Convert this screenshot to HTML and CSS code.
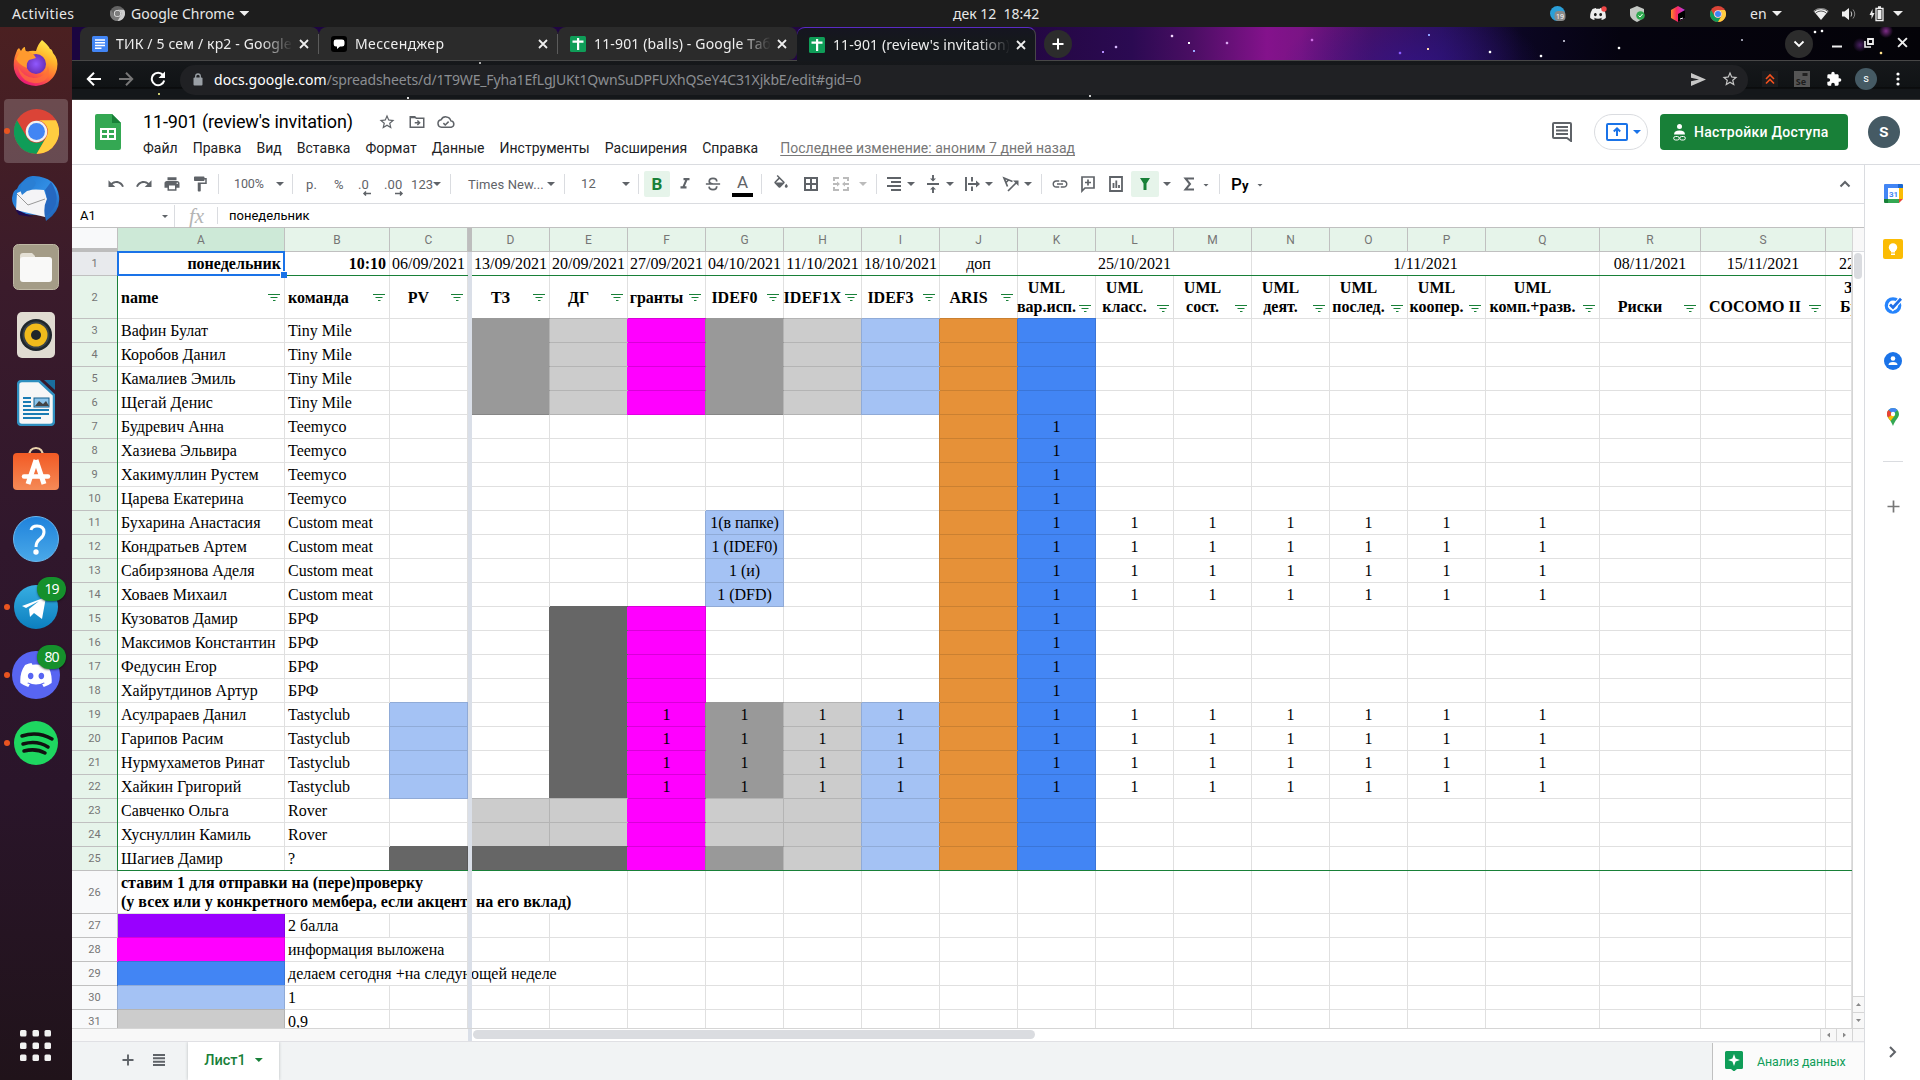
FILE: index.html
```html
<!DOCTYPE html>
<html lang="ru">
<head>
<meta charset="utf-8">
<title>11-901 (review's invitation)</title>
<link rel="stylesheet" href="styles.css">
</head>
<body>
<svg width="0" height="0" class="defs">
  <defs>
    <linearGradient id="ff" x1="0.8" y1="0" x2="0.3" y2="1"><stop offset="0" stop-color="#fff44f"/><stop offset=".35" stop-color="#ffb32c"/><stop offset=".65" stop-color="#ff6a36"/><stop offset="1" stop-color="#e8127c"/></linearGradient>
    <radialGradient id="ffp"><stop offset="0" stop-color="#9059ff"/><stop offset="1" stop-color="#6a2fb8"/></radialGradient>
    <linearGradient id="tb" x1="0" y1="0" x2="1" y2="1"><stop offset="0" stop-color="#1b6fc9"/><stop offset=".6" stop-color="#3795ea"/><stop offset="1" stop-color="#1550a6"/></linearGradient>
    <linearGradient id="sw" x1="0" y1="0" x2="0" y2="1"><stop offset="0" stop-color="#f25a24"/><stop offset="1" stop-color="#f58a57"/></linearGradient>
    <linearGradient id="hp" x1="0" y1="0" x2="0" y2="1"><stop offset="0" stop-color="#1f82dc"/><stop offset="1" stop-color="#4aa9e8"/></linearGradient>
    <linearGradient id="tg" x1="0" y1="0" x2="0" y2="1"><stop offset="0" stop-color="#37aee2"/><stop offset="1" stop-color="#0c7fbf"/></linearGradient>
    <linearGradient id="jb" x1="0" y1="0" x2="1" y2="0"><stop offset="0" stop-color="#fc8b2b"/><stop offset=".4" stop-color="#fb2a5c"/><stop offset="1" stop-color="#b23bf7"/></linearGradient>
    <symbol id="chrome" viewBox="0 0 48 48"><circle cx="24" cy="24" r="24" fill="#db4437"/><path d="M3.2 12A24 24 0 0 0 24 48L34.4 30A12 12 0 0 1 13.6 30Z" fill="#0f9d58"/><path d="M44.8 12A24 24 0 0 1 24 48L34.4 30A12 12 0 0 0 24 12Z" fill="#ffcd40"/><circle cx="24" cy="24" r="11.5" fill="#f1f1f1"/><circle cx="24" cy="24" r="9" fill="#4285f4"/></symbol>
    <symbol id="discord" viewBox="0 0 24 18"><path d="M20.3 1.5A19 19 0 0 0 15.5 0l-.7 1.3a18 18 0 0 0-5.5 0L8.600 0a19 19 0 0 0-4.800 1.500C.7 6 -.1 10.500.3 15a19 19 0 0 0 5.900 3l1.200-2-1.900-.9.5-.4a14 14 0 0 0 12 0l.5.4-1.900.9 1.200 2a19 19 0 0 0 5.900-3c.5-5.200-.8-9.700-3.400-13.500zM8 12.200c-1.200 0-2.100-1.100-2.100-2.400S6.800 7.400 8 7.400s2.200 1.100 2.100 2.400c0 1.300-.9 2.400-2.100 2.400zm8 0c-1.200 0-2.100-1.100-2.100-2.400s.9-2.400 2.100-2.400 2.200 1.100 2.100 2.400c0 1.300-.9 2.400-2.100 2.400z"/></symbol>
    <symbol id="x" viewBox="0 0 10 10"><path d="M1 1l8 8M9 1l-8 8" stroke="currentColor" stroke-width="1.8" fill="none"/></symbol>
    <symbol id="star" viewBox="0 0 24 24"><path fill="currentColor" d="M22 9.240l-7.190-.62L12 2 9.190 8.630 2 9.240l5.460 4.730L5.820 21 12 17.270 18.180 21l-1.630-7.030L22 9.240zM12 15.400l-3.760 2.270 1-4.280-3.320-2.880 4.380-.38L12 6.100l1.710 4.040 4.380.38-3.320 2.880 1 4.280L12 15.400z"/></symbol>
    <symbol id="gsheet" viewBox="0 0 16 16"><rect width="16" height="16" rx="1.500" fill="#0f9d58"/><path d="M2.500 4.500h11v2.200h-11zM7 2h2.200v12H7z" fill="#fff"/></symbol>
    <symbol id="filt" viewBox="0 0 12 7"><path d="M0 .5h12M2.500 3.500h7M5 6.500h2.500" stroke="#188038" stroke-width="1"/></symbol>
  </defs>
</svg>

<header class="topbar">
  <span class="activities">Activities</span>
  <span class="appmenu"><svg width="15" height="15" class="gray"><use href="#chrome"/></svg><span class="appname">Google Chrome</span><i class="dn white"></i></span>
  <span class="clock">дек 12&nbsp; 18:42</span>
  <div class="tray">
    <svg width="16" height="16" viewBox="0 0 16 16"><circle cx="7.500" cy="7.500" r="7.500" fill="#2b9fd8"/><rect x="4.500" y="5" width="11" height="10" rx="4" fill="#8a8a8a"/><text x="10" y="13" class="t8">19</text></svg>
    <svg width="17" height="16" viewBox="0 0 17 16"><svg y="2" width="16" height="12" viewBox="0 0 24 18"><use href="#discord" fill="#eee"/></svg><circle cx="14" cy="3" r="2.700" fill="#f04747"/></svg>
    <svg width="16" height="16" viewBox="0 0 16 16"><path d="M7 0l7 3v5c0 4-3 6-7 8C3 14 0 12 0 8V3z" fill="#c4c8c4"/><circle cx="10.500" cy="9.500" r="4.300" fill="#2fa84f"/><path d="M8.500 9.500l1.500 1.500 2.500-3" stroke="#fff" fill="none"/></svg>
    <svg width="16" height="16" viewBox="0 0 16 16"><path d="M8 0l7 4v8l-7 4-7-4V4z" fill="url(#jb)"/><path d="M8 8l7-4v8l-7 4z" fill="#000"/><path d="M10 13l3-1" stroke="#fff"/></svg>
    <svg width="16" height="16"><use href="#chrome"/></svg>
    <span>en</span><i class="dn white"></i>
    <svg width="16" height="14" viewBox="0 0 16 14"><path d="M8 13L.5 4a11 11 0 0 1 15 0z" fill="#eee"/><path d="M1 4.500a10 10 0 0 1 14 0M2.500 6.200a8 8 0 0 1 11 0" stroke="#1d1d1d" stroke-width=".7" fill="none"/></svg>
    <svg width="16" height="14" viewBox="0 0 16 14"><path d="M1 4.500h2.500L8 1v12L3.500 9.500H1z" fill="#eee"/><path d="M10 4.500q1.500 2.500 0 5" stroke="#ccc" fill="none"/><path d="M12 2.500q3.500 4.500 0 9" stroke="#888" fill="none"/></svg>
    <svg width="16" height="16" viewBox="0 0 16 16"><path d="M3.500 3L.5 9h2v4l3-6h-2z" fill="#eee"/><path d="M7 2.500h7v12H7zM9 1h3" stroke="#eee" stroke-width="1.300" fill="none"/><path d="M8.500 4h4v9h-4z" fill="#eee"/></svg>
    <i class="dn white"></i>
  </div>
</header>

<div class="desk">
<nav class="dock">
  <div class="app"><svg width="46" height="46" viewBox="0 0 46 46"><path d="M3 13q1-4 3-5l2 3q2-4 4-4 0 4 2 5 4-2 9-1Q25 4 29 0q7 6 8 9 2 0 3 4 6 6 4 16Q40 44 23 46 5 45 1 29 0 20 3 13z" fill="url(#ff)"/><circle cx="23" cy="24" r="10" fill="url(#ffp)"/><path d="M7 12q7-3 14 3l2 3-7 2q-3 3-2 8-8-3-11-9z" fill="#ff9a2e"/><path d="M5 27q8 14 22 10 7-3 8-11 3 10-4 15-10 5-19-1-6-5-7-13z" fill="#ff7139" opacity=".7"/></svg></div>
  <div class="app active run"><svg width="45" height="45"><use href="#chrome"/></svg></div>
  <div class="app"><svg width="48" height="48" viewBox="0 0 48 48"><path d="M10 7Q16 0 22 1q22 1 25 20 2 15-13 25l-1-5-20-2Q0 34 0 23q1-8 5-9 1-4 5-7z" fill="url(#tb)"/><path d="M5 18l7-3q14-1 20 0l3 9-2 18L4 35z" fill="#f4f4f6"/><path d="M5 19l11 11 17-6" stroke="#999" fill="none"/><path d="M10 8q10-8 14 0-2 7-9 8l-5 4q-3-6 0-12z" fill="#2a7fd4"/><path d="M33 42q-2-10 2-18l-2-9 6-8q14 22-6 35z" fill="#2568c0"/><path d="M3 34l18 8-14-2z" fill="#1d0b52"/></svg></div>
  <div class="app"><svg width="46" height="46" viewBox="0 0 46 46"><rect x=".5" y=".5" width="45" height="45" rx="5" fill="#a49c87" stroke="#bfb8a5"/><path d="M7 12q0-3 3-3h9l3 3v8H7z" fill="#e4e0d5"/><rect x="7" y="13" width="32" height="25" rx="3" fill="#f9f9f8"/></svg></div>
  <div class="app"><svg width="38" height="46" viewBox="0 0 38 46"><rect width="38" height="46" rx="5" fill="#e0dbd1"/><circle cx="19" cy="23" r="16" fill="#1f262b"/><circle cx="19" cy="23" r="13.500" fill="#394248"/><circle cx="19" cy="23" r="11.500" fill="#f1bb1c"/><circle cx="19" cy="23" r="5" fill="#20262a"/></svg></div>
  <div class="app"><svg width="38" height="46" viewBox="0 0 38 46"><path d="M5 1h17l15 14v26q0 4-4 4H5q-4 0-4-4V5q0-4 4-4z" fill="#f7f7f7" stroke="#2f8fbf" stroke-width="2.500"/><path d="M27 0h11v10z" fill="#1a6e9e"/><path d="M6 18h8M6 22h8M6 26h8M6 30h26M6 34h26M6 38h18" stroke="#1b7cb4" stroke-width="2"/><rect x="17" y="18" width="15" height="9" fill="#8cc4ea" stroke="#14618e"/><path d="M18 26l4-5 4 3 3-3 3 5z" fill="#444"/></svg></div>
  <div class="app"><svg width="46" height="50" viewBox="0 0 46 50"><path d="M16 11q0-9 7-9t7 9" stroke="#ead2ab" stroke-width="2" fill="none"/><rect y="7" width="46" height="37" rx="4" fill="url(#sw)"/><path d="M23 14l-8 24M23 14l8 24" stroke="#fff" stroke-width="5"/><path d="M11 30.500h24" stroke="#fff" stroke-width="4.500" stroke-linecap="round"/></svg></div>
  <div class="app"><svg width="46" height="46" viewBox="0 0 46 46"><circle cx="23" cy="23" r="22.500" fill="url(#hp)" stroke="#6bb8ef"/><path d="M18 14q1-4 6-4 7 0 7 6 0 4-4 7-4 3-4 8" stroke="#fff" stroke-width="3" fill="none"/><circle cx="23" cy="36" r="2.700" fill="#fff"/></svg></div>
  <div class="app run"><svg width="44" height="44" viewBox="0 0 44 44"><circle cx="22" cy="22" r="22" fill="url(#tg)"/><path d="M8 21l24-9-4 22-8-6-4 4-1-8 10-8-13 7z" fill="#fff"/></svg><b class="badge">19</b></div>
  <div class="app run"><svg width="48" height="48" viewBox="0 0 48 48"><circle cx="24" cy="24" r="24" fill="#5865f2"/><svg x="8" y="12" width="32" height="24" viewBox="0 0 24 18"><use href="#discord" fill="#fff"/></svg></svg><b class="badge">80</b></div>
  <div class="app run"><svg width="44" height="44" viewBox="0 0 44 44"><circle cx="22" cy="22" r="22" fill="#1ed760"/><path d="M8 15q16-5 30 3M9 23q14-4 25 3M10 30q12-3 21 2" stroke="#111" stroke-width="3.500" fill="none" stroke-linecap="round"/></svg></div>
  <div class="app grid9"><svg width="32" height="32" viewBox="0 0 32 32" fill="#f2f2f2"><rect width="6.500" height="6.500" rx="1.500"/><rect x="12.500" width="6.500" height="6.500" rx="1.500"/><rect x="24.500" width="6.500" height="6.500" rx="1.500"/><rect y="12.500" width="6.500" height="6.500" rx="1.500"/><rect x="12.500" y="12.500" width="6.500" height="6.500" rx="1.500"/><rect x="24.500" y="12.500" width="6.500" height="6.500" rx="1.500"/><rect y="24.500" width="6.500" height="6.500" rx="1.500"/><rect x="12.500" y="24.500" width="6.500" height="6.500" rx="1.500"/><rect x="24.500" y="24.500" width="6.500" height="6.500" rx="1.500"/></svg></div>
</nav>

<main class="win">
  <div class="strip">
    <div class="tab"><svg width="16" height="16" viewBox="0 0 16 16"><rect width="16" height="16" rx="1.500" fill="#4285f4"/><path d="M3 4h10M3 6.800h10M3 9.600h10M3 12.200h6.500" stroke="#fff" stroke-width="1.500"/></svg><span class="ttl">ТИК / 5 сем / кр2 - Google</span><svg width="10" height="10"><use href="#x"/></svg></div>
    <div class="tab"><svg width="16" height="16" viewBox="0 0 16 16"><rect width="16" height="16" rx="3" fill="#000"/><path d="M5 3.500h6q2.500 0 2.500 2.300v2.500q0 2.200-2.500 2.200H9L6 13v-2.500H5Q2.700 10.500 2.700 8.300V5.800Q2.700 3.500 5 3.500z" fill="#fff"/></svg><span class="ttl wide">Мессенджер</span><svg width="10" height="10"><use href="#x"/></svg></div>
    <div class="tab nosep"><svg width="16" height="16"><use href="#gsheet"/></svg><span class="ttl">11-901 (balls) - Google Таб</span><svg width="10" height="10"><use href="#x"/></svg></div>
    <div class="tab cur nosep"><svg width="16" height="16"><use href="#gsheet"/></svg><span class="ttl">11-901 (review's invitation)</span><svg width="10" height="10"><use href="#x"/></svg></div>
    <div class="round"><svg width="12" height="12" viewBox="0 0 12 12"><path d="M6 .5v11M.5 6h11" stroke="#fff" stroke-width="2"/></svg></div>
    <div class="winbtns">
      <div class="round"><svg width="12" height="8" viewBox="0 0 12 8"><path d="M1.500 1.500L6 6l4.500-4.500" stroke="#fff" stroke-width="1.800" fill="none"/></svg></div>
      <svg width="10" height="10" viewBox="0 0 10 10"><path d="M0 8.500h10" stroke="#eee" stroke-width="2"/></svg>
      <svg width="10" height="10" viewBox="0 0 10 10"><path d="M4 1h5v5H4z" stroke="#eee" stroke-width="1.800" fill="none"/><path d="M1 3v6h6" stroke="#eee" stroke-width="1.600" fill="none"/></svg>
      <svg width="11" height="11"><use href="#x"/></svg>
    </div>
  </div>
  <div class="navbar">
    <svg width="16" height="14" viewBox="0 0 16 14"><path d="M8 .8L1.800 7 8 13.200M2 7h13" stroke="#fff" stroke-width="2" fill="none"/></svg>
    <svg width="16" height="14" viewBox="0 0 16 14"><path d="M8 .8L14.200 7 8 13.200M14 7H1" stroke="#777" stroke-width="2" fill="none"/></svg>
    <svg width="16" height="16" viewBox="0 0 16 16"><path d="M13 4A6.300 6.300 0 1 0 14.200 9.500" stroke="#fff" stroke-width="2" fill="none"/><path d="M15 .5V7H8.500z" fill="#fff"/></svg>
    <div class="omni">
      <svg width="10" height="13" viewBox="0 0 10 13"><rect x=".5" y="4.500" width="9" height="8" rx="1" fill="#9aa0a6"/><path d="M2.700 5V3.300a2.300 2.300 0 0 1 4.600 0V5" stroke="#9aa0a6" stroke-width="1.300" fill="none"/></svg>
      <span class="url"><em>docs.google.com</em>/spreadsheets/d/1T9WE_Fyha1EfLgJUKt1QwnSuDPFUXhQSeY4C31XjkbE/edit#gid=0</span>
      <svg class="send" width="15" height="13" viewBox="0 0 15 13"><path d="M0 0l15 6.500L0 13V8.200l8-1.700-8-1.700z" fill="#c6c6c6"/></svg>
      <svg class="fav" width="18" height="18"><use href="#star"/></svg>
    </div>
    <div class="exts">
      <svg width="16" height="16" viewBox="0 0 16 16"><rect width="16" height="16" fill="#1c1c1e"/><path d="M4 8l4-4 4 4M4 12.500l4-4 4 4" stroke="#f4511e" stroke-width="1.600" fill="none"/></svg>
      <svg width="16" height="16" viewBox="0 0 16 16"><rect width="16" height="16" fill="#555"/><rect x="8.500" y="2" width="5" height="3" fill="#222"/><text x="7" y="14" class="se">Se</text></svg>
      <svg width="16" height="16" viewBox="0 0 24 24"><path fill="#fff" d="M20.500 11H19V7c0-1.100-.9-2-2-2h-4V3.500a2.500 2.500 0 0 0-5 0V5H4a2 2 0 0 0-2 2v3.800h1.500a2.700 2.700 0 0 1 0 5.400H2V20a2 2 0 0 0 2 2h3.800v-1.500a2.700 2.700 0 0 1 5.400 0V22H17a2 2 0 0 0 2-2v-4h1.500a2.500 2.500 0 0 0 0-5z"/></svg>
      <b class="ava s">s</b>
      <svg width="4" height="14" viewBox="0 0 4 14" fill="#fff"><circle cx="2" cy="2" r="1.600"/><circle cx="2" cy="7" r="1.600"/><circle cx="2" cy="12" r="1.600"/></svg>
    </div>
  </div>

  <div class="dochead">
    <svg width="26" height="36" viewBox="0 0 26 36"><path d="M2 0h15l9 9v25q0 2-2 2H2q-2 0-2-2V2q0-2 2-2z" fill="#34a853"/><path d="M17 0l9 9h-9z" fill="#188038"/><path d="M5 14h16v12H5z" fill="#fff"/><path d="M7 16h5v3H7zM14 16h5v3h-5zM7 21h5v3H7zM14 21h5v3h-5z" fill="#34a853"/></svg>
    <div class="names">
      <div class="trow"><h1>11-901 (review's invitation)</h1>
        <svg width="18" height="18" color="#5f6368"><use href="#star"/></svg>
        <svg width="18" height="18" viewBox="0 0 24 24"><path fill="none" stroke="#5f6368" stroke-width="2" d="M3 5h6l2 2h10v12H3zM3 6h7M9 13h6M12.500 10l3 3-3 3"/></svg>
        <svg width="18" height="18" viewBox="0 0 24 24"><path fill="none" stroke="#5f6368" stroke-width="2" d="M6 19a5 5 0 0 1-.6-9.900A7 7 0 0 1 18.500 10.500 4.300 4.300 0 0 1 19 19zM8.500 13.500l2.500 2.500 4.500-4.500"/></svg>
      </div>
      <div class="menus"><span>Файл</span><span>Правка</span><span>Вид</span><span>Вставка</span><span>Формат</span><span>Данные</span><span>Инструменты</span><span>Расширения</span><span>Справка</span><u>Последнее изменение: аноним 7 дней назад</u></div>
    </div>
    <div class="headr">
      <svg width="20" height="20" viewBox="0 0 20 20"><path d="M2 1h16q1 0 1 1v17l-4-3H2q-1 0-1-1V2q0-1 1-1z" fill="none" stroke="#5f6368" stroke-width="2"/><path d="M4 5h12M4 8.500h12M4 12h12" stroke="#5f6368" stroke-width="1.800"/></svg>
      <div class="present"><svg width="22" height="18" viewBox="0 0 22 18"><rect x="1" y="1" width="20" height="16" rx="1" fill="none" stroke="#1a73e8" stroke-width="2"/><path d="M11 13V6M7.800 8.500L11 5.300l3.200 3.200" stroke="#1a73e8" stroke-width="2" fill="none"/></svg><i class="dn blue"></i></div>
      <div class="share"><svg width="13" height="17" viewBox="0 0 13 17"><circle cx="6.500" cy="2.500" r="2.500" fill="#fff"/><path d="M1 10.500Q1 6.500 6.500 6.500T12 10.500z" fill="#fff"/><rect x=".7" y="12.500" width="5.500" height="3.500" rx="1.700" fill="none" stroke="#fff"/><rect x="6.800" y="12.500" width="5.500" height="3.500" rx="1.700" fill="none" stroke="#fff"/></svg><span>Настройки Доступа</span></div>
      <b class="ava">s</b>
    </div>
  </div>

  <div class="work">
    <div class="editor">
      <div class="toolbar">
        <svg width="18" height="18" viewBox="0 0 24 24"><path fill="#5f6368" d="M12.500 8c-2.650 0-5.050.99-6.900 2.600L2 7v9h9l-3.620-3.620c1.390-1.160 3.160-1.880 5.120-1.880 3.540 0 6.550 2.310 7.600 5.500l2.370-.78C21.080 11.030 17.150 8 12.500 8z"/></svg>
        <svg width="18" height="18" viewBox="0 0 24 24"><path fill="#5f6368" d="M18.400 10.600C16.550 8.990 14.150 8 11.500 8c-4.650 0-8.580 3.030-9.960 7.220L3.900 16c1.050-3.190 4.050-5.500 7.600-5.500 1.950 0 3.730.72 5.120 1.880L13 16h9V7l-3.600 3.600z"/></svg>
        <svg width="18" height="18" viewBox="0 0 24 24"><path fill="#5f6368" d="M19 8H5c-1.660 0-3 1.340-3 3v6h4v4h12v-4h4v-6c0-1.660-1.340-3-3-3zm-3 11H8v-5h8v5zm3-7c-.55 0-1-.45-1-1s.45-1 1-1 1 .45 1 1-.45 1-1 1zm-1-9H6v4h12V3z"/></svg>
        <svg width="18" height="18" viewBox="0 0 24 24"><path fill="#5f6368" d="M18 4V3c0-.55-.45-1-1-1H5c-.55 0-1 .45-1 1v4c0 .55.45 1 1 1h12c.55 0 1-.45 1-1V6h1v4H9v11c0 .55.45 1 1 1h2c.55 0 1-.45 1-1v-9h8V4h-3z"/></svg>
        <i class="sep"></i><span class="up pct">100%</span><i class="dn"></i><i class="sep"></i>
        <span>р.</span><span>%</span><span>.0<svg class="sub" width="9" height="5" viewBox="0 0 9 5"><path d="M9 2.500H2M4 .5l-2 2 2 2" stroke="#5f6368" stroke-width="1.500" fill="none"/></svg></span><span>.00<svg class="sub" width="9" height="5" viewBox="0 0 9 5"><path d="M0 2.500h7M5 .5l2 2-2 2" stroke="#5f6368" stroke-width="1.500" fill="none"/></svg></span><span>123</span><i class="dn"></i><i class="sep"></i>
        <span class="face">Times New...</span><i class="dn"></i><i class="sep"></i><span class="up">12</span><i class="dn"></i><i class="sep"></i>
        <span class="on"><b>B</b></span>
        <svg width="18" height="18" viewBox="0 0 24 24"><path fill="#5f6368" d="M10 4v3h2.210l-3.420 8H6v3h8v-3h-2.210l3.420-8H18V4z"/></svg>
        <svg width="18" height="18" viewBox="0 0 24 24"><path fill="none" stroke="#5f6368" stroke-width="2.300" d="M2.500 12h19M17 8.500Q17 4.500 12 4.500T7 8.500Q7 11 12 12M17 15Q17 19.500 12 19.500T6.800 15.500"/></svg>
        <span class="fc">A</span><i class="sep"></i>
        <svg width="18" height="18" viewBox="0 0 24 24"><path fill="#5f6368" d="M16.560 8.940L7.620 0 6.210 1.410l2.380 2.380-5.150 5.150c-.59.59-.59 1.540 0 2.120l5.500 5.500c.59.590 1.540.590 2.120 0l5.500-5.500c.59-.58.59-1.530 0-2.120zM5.210 10L10 5.210 14.790 10H5.210zM19 11.500s-2 2.170-2 3.500c0 1.100.9 2 2 2s2-.9 2-2c0-1.330-2-3.500-2-3.500z"/></svg>
        <svg width="18" height="18" viewBox="0 0 18 18"><path fill="none" stroke="#5f6368" stroke-width="2" d="M3 3h12v12H3zM9 3v12M3 9h12"/></svg>
        <svg width="18" height="18" viewBox="0 0 18 18"><path fill="none" stroke="#bbb" stroke-width="2" d="M2 6V3h5M11 3h5v3M2 12v3h5M11 15h5v-3M1 9h6M11 9h6"/><path fill="#bbb" d="M5 6.500L8 9l-3 2.500zM13 6.500L10 9l3 2.500z"/></svg>
        <i class="dn dis"></i><i class="sep"></i>
        <svg width="18" height="18" viewBox="0 0 18 18"><path stroke="#5f6368" stroke-width="1.900" d="M2 3h14M6 7h10M2 11h14M6 15h10"/></svg><i class="dn"></i>
        <svg width="18" height="18" viewBox="0 0 18 18"><path stroke="#5f6368" stroke-width="1.900" d="M3 9h12M9 0v4M9 14v4"/><path fill="#5f6368" d="M6 3.500h6l-3 3zM6 14.500h6l-3-3z"/></svg><i class="dn"></i>
        <svg width="18" height="18" viewBox="0 0 18 18"><path stroke="#5f6368" stroke-width="1.900" fill="none" d="M3 2v14M9 2v4.500M9 11.500V16M5 9h9"/><path fill="#5f6368" d="M13 5.500L17 9l-4 3.500z"/></svg><i class="dn"></i>
        <svg width="18" height="18" viewBox="0 0 18 18"><path stroke="#5f6368" stroke-width="1.700" fill="none" d="M5.500 11.500L2 3l8.500 3.500M3.500 8L7 4.500M6 16L15 7"/><path fill="#5f6368" d="M11 5.500h5.500V11z"/></svg><i class="dn"></i><i class="sep"></i>
        <svg width="18" height="18" viewBox="0 0 24 24"><path fill="#5f6368" d="M3.900 12c0-1.710 1.390-3.100 3.100-3.100h4V7H7c-2.760 0-5 2.240-5 5s2.240 5 5 5h4v-1.900H7c-1.710 0-3.100-1.390-3.100-3.100zM8 13h8v-2H8v2zm9-6h-4v1.900h4c1.710 0 3.100 1.390 3.100 3.100s-1.390 3.100-3.100 3.100h-4V17h4c2.760 0 5-2.240 5-5s-2.240-5-5-5z"/></svg>
        <svg width="18" height="18" viewBox="0 0 18 18"><path fill="none" stroke="#5f6368" stroke-width="1.700" d="M3 2h12v11H6l-3 3zM9 4.500v6M6 7.500h6"/></svg>
        <svg width="18" height="18" viewBox="0 0 18 18"><path fill="none" stroke="#5f6368" stroke-width="1.800" d="M3 2h12v14H3zM6.500 8v5M9.300 5.500V13M12 10v3"/></svg>
        <span class="on fl"><svg width="14" height="14" viewBox="0 0 14 14"><path d="M2 1h10L8.500 6.500V13h-3V6.500z" fill="#188038"/></svg></span><i class="dn"></i>
        <svg width="18" height="18" viewBox="0 0 18 18"><path fill="none" stroke="#5f6368" stroke-width="2" d="M14 3.500H5.500L10 9l-4.500 5.500H14"/></svg><i class="dn sm"></i><i class="sep"></i>
        <span class="py">P<small>y</small></span><i class="dn sm"></i>
        <svg width="18" height="18" viewBox="0 0 18 18"><path fill="none" stroke="#5f6368" stroke-width="2" d="M4.500 11.500L9 7l4.500 4.500"/></svg>
      </div>
      <div class="fbar"><span class="ref">A1</span><i class="dn sm"></i><i class="fs"></i><span class="fx">fx</span><i class="fs sh"></i><span>понедельник</span></div>
      <div class="sheetwrap">
        <div class="sheet"><div class="cells" id="cells"></div><div class="range"></div><div class="sel"><i></i></div><div class="freeze"></div></div>
        <div class="vs"><div class="vhead"></div><div class="vtrack"><i></i></div><div class="sb"><i class="tri u"></i></div><div class="sb"><i class="tri d"></i></div></div>
      </div>
      <div class="hs"><div class="hfix"></div><div class="hbar"></div><div class="htrack"><i></i></div><div class="hb"><i class="tri l"></i></div><div class="hb"><i class="tri r"></i></div><div class="hc"></div></div>
      <div class="bottom">
        <svg width="14" height="14" viewBox="0 0 14 14"><path d="M7 1.500v11M1.500 7h11" stroke="#5f6368" stroke-width="1.900"/></svg>
        <svg width="14" height="14" viewBox="0 0 14 14"><path d="M1 2h12M1 5.300h12M1 8.700h12M1 12h12" stroke="#5f6368" stroke-width="1.900"/></svg>
        <div class="stab"><span>Лист1</span><i class="dn green"></i></div>
        <div class="explore"><svg width="18" height="20" viewBox="0 0 18 20"><path d="M1.500 0h15Q18 0 18 1.500v15q0 1.500-1.500 1.500H12l-3 2.500L6 18H1.500Q0 18 0 16.500v-15Q0 0 1.500 0z" fill="#0f9d58"/><path d="M9 3l1.600 4.400L15 9l-4.400 1.600L9 15l-1.600-4.400L3 9l4.400-1.600z" fill="#fff"/></svg><span>Анализ данных</span></div>
      </div>
    </div>
    <aside class="side">
      <svg width="19" height="19" viewBox="0 0 19 19"><path d="M4 4h11v11H4z" fill="#fff"/><path d="M1 0h13v4H4v11H0V1q0-1 1-1z" fill="#4285f4"/><path d="M14 0h4q1 0 1 1v3h-5z" fill="#1967d2"/><path d="M15 4h4v11h-4z" fill="#fbbc04"/><path d="M4 15h11v4H4z" fill="#34a853"/><path d="M0 15h4v4H1q-1 0-1-1z" fill="#188038"/><path d="M15 15h4l-4 4z" fill="#ea4335"/><text x="9.500" y="12.500" class="cal">31</text></svg>
      <svg width="20" height="20" viewBox="0 0 20 20"><rect width="20" height="20" rx="2" fill="#fbbc04"/><circle cx="10" cy="8.500" r="4.200" fill="#fff"/><path d="M8 11h4v2.500H8zM8 14.500h4V16H8z" fill="#fff"/></svg>
      <svg width="19" height="18" viewBox="0 0 19 18"><circle cx="9" cy="9.500" r="6.700" fill="none" stroke="#2684fc" stroke-width="3.300"/><path d="M5.500 8.500l3.200 3.300L17 3" stroke="#fff" stroke-width="5" fill="none"/><path d="M6 8.500l3 3L17 2.800" stroke="#1f6fe8" stroke-width="2.800" fill="none"/></svg>
      <svg width="18" height="18" viewBox="0 0 18 18"><circle cx="9" cy="9" r="9" fill="#1a73e8"/><circle cx="9" cy="6.500" r="2.300" fill="#fff"/><path d="M4.500 13q0-3 4.500-3t4.500 3z" fill="#fff"/></svg>
      <svg width="12" height="18" viewBox="0 0 12 18"><path d="M6 0a6 6 0 0 1 6 6c0 4-4 6-6 12C4 12 0 10 0 6a6 6 0 0 1 6-6z" fill="#34a853"/><path d="M1.500 2L6 6l4.500-4Q9 0 6 0T1.500 2z" fill="#4285f4"/><path d="M1.500 2L6 6l-4.800 4Q-1.500 5 1.500 2z" fill="#ea4335"/><path d="M1 9.500L6 6l1.500 2L3.500 13z" fill="#fbbc04"/><circle cx="6" cy="6" r="2.200" fill="#fff"/></svg>
      <i class="rule"></i>
      <svg width="13" height="13" viewBox="0 0 13 13"><path d="M6.500 .5v12M.5 6.500h12" stroke="#777" stroke-width="1.700"/></svg>
      <svg class="last" width="8" height="12" viewBox="0 0 8 12"><path d="M1 1l5 5-5 5" stroke="#5f6368" stroke-width="2" fill="none"/></svg>
    </aside>
  </div>
</main>
</div>
<script src="sheet.js"></script>
</body>
</html>
```
FILE: styles.css
```css
* { box-sizing: border-box; }
body { margin: 0; width: 1920px; height: 1080px; overflow: hidden; font-family: Roboto, "Liberation Sans", sans-serif; background: #fff; }
svg { display: block; flex: none; }
.defs { position: absolute; }
i { font-style: normal; }

.topbar { height: 27px; background: #1d1d1d; color: #e8e8e8; font: 14px "Noto Sans", sans-serif; letter-spacing: 0; display: grid; grid-template-columns: 98px 843px 597px 1fr; padding-left: 12px; align-items: center; }
.activities { letter-spacing: .4px; }
.appmenu { display: flex; align-items: center; }
.appname { margin: 0 5px 0 6px; }
.gray { filter: grayscale(1); }
.tray { display: grid; grid-template-columns: 40px 40px 40px 40px 40px 22px 41px 28px 28px 24px 20px; align-items: center; }
.t8 { font: 7px "Noto Sans", sans-serif; fill: #fff; text-anchor: middle; }
.se { font: bold 9px "Noto Sans", sans-serif; fill: #1d1d1d; text-anchor: middle; }
.cal { font: bold 8px Roboto, sans-serif; fill: #4285f4; text-anchor: middle; }
.dn { width: 8px; height: 4px; background: #5f6368; clip-path: polygon(0 0, 100% 0, 50% 100%); flex: none; }
.dn.white { background: #eee; width: 10px; height: 5px; }
.dn.blue { background: #1a73e8; }
.dn.green { background: #188038; }
.dn.dis { background: #bbb; }
.dn.sm { width: 6px; height: 3px; margin: 2px 1px 0; }

.desk { display: flex; height: 1053px; }
.dock { width: 72px; background: linear-gradient(#4b2021 0, #3a1b2b 260px, #30172c 520px, #2a152a 760px, #20131a 1053px); display: flex; flex-direction: column; align-items: center; gap: 4px; padding-top: 4px; }
.app { width: 64px; height: 64px; display: flex; align-items: center; justify-content: center; position: relative; border-radius: 4px; }
.app.active { background: rgba(255,255,255,.2); }
.app.run::before { content: ""; position: absolute; left: 0; top: 29px; width: 6px; height: 6px; border-radius: 3px; background: #e95420; }
.badge { position: absolute; right: 2px; top: 2px; width: 29px; height: 24px; border-radius: 12px; background: #15902c; color: #fff; font: 14px/24px "Noto Sans", sans-serif; letter-spacing: -1px; text-align: center; box-shadow: 0 1px 2px rgba(0,0,0,.5); }
.grid9 { margin-top: auto; margin-bottom: 2px; }

.win { width: 1848px; display: flex; flex-direction: column; }
.strip { height: 34px; border-bottom: 1px solid #474747; padding-left: 8px; display: flex; align-items: flex-start; color: #eee;
  background:
    radial-gradient(circle at 1117px 16px, #fff 1px, transparent 1.500px),
    radial-gradient(circle at 1044px 20px, #d8b8ff 1px, transparent 1.700px),
    radial-gradient(circle at 1155px 16px, #d9a8f0 1px, transparent 1.700px),
    radial-gradient(circle at 1100px 9px, #f4d9ff 1px, transparent 1.700px),
    radial-gradient(circle at 1031px 25px, #b48cff 1px, transparent 1.500px),
    radial-gradient(circle at 1122px 24px, #9aa8ff 1px, transparent 1.500px),
    radial-gradient(circle at 1240px 13px, #d070e8 1px, transparent 1.700px),
    radial-gradient(circle at 1357px 8px, #8ea0ff 1px, transparent 1.500px),
    radial-gradient(circle at 1418px 25px, #fff 1px, transparent 1.700px),
    radial-gradient(circle at 1469px 29px, #fff 1px, transparent 1.700px),
    radial-gradient(circle at 1492px 14px, #aab 1px, transparent 1.500px),
    radial-gradient(circle at 1547px 21px, #fff 1px, transparent 1.700px),
    radial-gradient(circle at 1356px 22px, #ffd9b0 1px, transparent 1.500px),
    radial-gradient(circle at 1328px 26px, #8a5cff 1px, transparent 1.700px),
    radial-gradient(circle at 1670px 13px, #99a 1px, transparent 1.500px),
    radial-gradient(circle at 1743px 5px, #fff 1px, transparent 1.700px),
    radial-gradient(circle at 1750px 4px, #fff 1px, transparent 1.700px),
    radial-gradient(circle at 1809px 26px, #ffe08a 1px, transparent 1.700px),
    radial-gradient(circle at 1814px 4px, rgba(140,50,150,.9), transparent 7px),
    radial-gradient(circle at 1788px 18px, rgba(90,40,120,.8), transparent 7px),
    radial-gradient(ellipse 130px 60px at 1340px 38px, rgba(50,20,140,.7), transparent),
    linear-gradient(90deg, #1b0540 0, #240743 960px, #2b0a52 1060px, #4a0e63 1120px, #84128c 1195px, #7a1485 1230px, #471060 1300px, #28105a 1370px, #0b0622 1450px, #05030f 1550px, #040308 1848px); }
.tab { width: 239px; height: 33px; background: #2b2b2b; border-radius: 8px 8px 0 0; display: flex; align-items: center; padding: 0 10px 0 12px; position: relative; }
.tab:nth-child(3) { border-radius: 8px 8px 8px 0; }
.tab::after { content: ""; position: absolute; right: 0; top: 7px; width: 1px; height: 20px; background: #5b5b5b; }
.tab.nosep::after { display: none; }
.tab.cur { background: linear-gradient(#151521, #15181c 12px); height: 34px; border-top: 1px solid #5a2bc4; border-right: 1px solid #474747; }
.ttl { font: 14px "Noto Sans", sans-serif; width: 176px; margin-left: 8px; margin-right: 7px; overflow: hidden; white-space: nowrap; -webkit-mask-image: linear-gradient(90deg, #000 145px, transparent 177px); flex: none; letter-spacing: .15px; }
.ttl.wide { letter-spacing: .4px; }
.cur .ttl { letter-spacing: .1px; }
.round { width: 28px; height: 28px; margin: 3px 0 0 8px; border-radius: 14px; background: #2c2c2c; display: flex; align-items: center; justify-content: center; }
.winbtns { margin-left: auto; display: grid; grid-template-columns: 47px 32px 33px 17px; align-items: center; padding-right: 6px; }
.winbtns .round { margin-left: 0; }
.navbar { height: 39px; border-bottom: 1px solid #3c3c3c; display: grid; grid-template-columns: 32px 32px 30px 1568px 1fr; align-items: center; padding: 0 0 2px 14px;
  background:
    radial-gradient(circle at 87px 33px, #c8c870 1px, transparent 1.500px),
    radial-gradient(circle at 336px 37px, #ddd 1px, transparent 1.500px),
    radial-gradient(circle at 408px 2px, #aaa 1px, transparent 1.500px),
    radial-gradient(circle at 1018px 35px, #ccc 1px, transparent 1.500px),
    linear-gradient(#16181b, #101315 26px, #050505 27px, #14171a 28px, #14171a); }
.omni { height: 30px; border-radius: 15px; background: #202124; display: flex; align-items: center; padding-left: 13px; margin-top: 2px; }
.url { font: 14px "Noto Sans", sans-serif; color: #8b8e92; margin-left: 11px; white-space: nowrap; letter-spacing: -.16px; }
.url em { font-style: normal; color: #fff; letter-spacing: .05px; }
.omni > svg, .url { position: relative; top: -1px; }
.send { margin-left: auto; margin-right: 15px; }
.fav { color: #c6c6c6; margin-right: 9px; }
.exts { display: grid; grid-template-columns: 32px 32px 29px 41px 4px; align-items: center; margin-left: 14px; }
.ava { width: 32px; height: 32px; border-radius: 50%; background: #455a64; color: #fff; font: 500 19px/30px Roboto, sans-serif; text-align: center; flex: none; }
.ava.s { width: 22px; height: 22px; font: 11px/21px Roboto, sans-serif; }

.dochead { height: 65px; border-bottom: 1px solid #dadce0; display: flex; padding: 14px 20px 0 23px; }
.names { margin-left: 22px; margin-top: -8px; }
.trow { display: flex; align-items: center; height: 31px; gap: 12px; }
h1 { margin: 0 12px 0 0; font: 400 18px/30px Roboto, sans-serif; letter-spacing: -.14px; width: 211px; white-space: nowrap; }
.trow > svg { margin-right: -.5px; }
.menus { display: flex; gap: 15px; font-size: 14px; color: #202124; line-height: 24px; margin-top: -1px; white-space: nowrap; letter-spacing: .02px; }
.menus u { margin-left: 7px; color: #777; text-underline-offset: 2px; text-decoration-thickness: 1px; }
.headr { margin-left: auto; display: flex; align-items: flex-start; }
.headr > svg { margin: 8px 22px 0 0; }
.present { width: 54px; height: 36px; border: 1px solid #dadce0; border-radius: 18px; display: flex; align-items: center; gap: 5px; padding-left: 11px; }
.share { width: 188px; height: 36px; background: #188038; border-radius: 4px; margin-left: 12px; margin-right: 20px; color: #fff; font: 500 14px Roboto, sans-serif; display: flex; align-items: center; padding-left: 13px; white-space: nowrap; }
.share span { margin-left: 8px; letter-spacing: .27px; }
.headr .ava { margin-top: 2px; }

.work { display: flex; flex: 1; min-height: 0; }
.editor { width: 1792px; display: flex; flex-direction: column; }
.toolbar { height: 39px; border-bottom: 1px solid #dadce0; display: grid; align-items: center; justify-items: start; padding-left: 35px; font-size: 13px; color: #5f6368; white-space: nowrap;
  grid-template-columns: 28px 28px 28px 27px 16px 42px 16px 14px 28px 24px 26px 27px 22px 17px 18px 79px 17px 17px 41px 16px 6px 32px 28px 28px 29px 11px 30px 30px 27px 17px 9px 22px 17px 22px 17px 22px 17px 22px 17px 10px 28px 28px 24px 32px 17px 22px 17px 12px 25px 580px 18px; }
.toolbar span { position: relative; letter-spacing: .1px; }
.toolbar .up { top: -1px; }
.toolbar .pct { font-size: 12.500px; letter-spacing: -.1px; }
.sep { width: 1px; height: 20px; background: #dadce0; }
.sub { position: absolute; right: -2px; bottom: -4px; }
.on { width: 26px; height: 26px; border-radius: 2px; background: #e6f4ea; color: #188038; font-size: 17px; display: flex; align-items: center; justify-content: center; }
.on.fl { width: 28px; }
.fc { width: 21px; height: 26px; text-align: center; font-size: 17px; line-height: 22px; border-bottom: 4px solid #000; }
.py { color: #000; font: 500 17px Roboto, sans-serif; }
.py small { font-size: 13px; font-weight: 700; }
.fbar { height: 24px; border-bottom: 1px solid #c0c0c0; display: grid; grid-template-columns: 81px 13px 15px 28px 12px 1fr; align-items: center; padding-left: 8px; font-size: 13px; color: #000; }
.fs { width: 1px; height: 22px; background: #dadce0; }
.fs.sh { height: 17px; }
.fx { font: italic 21px "Liberation Serif", serif; color: #b4b4b4; line-height: 20px; }

.sheetwrap { display: flex; height: 801px; border-bottom: 1px solid #d5d5d5; }
.sheet { width: 1780px; position: relative; overflow: hidden; }
.cells { display: grid; width: 1780px; grid-template-columns: 46px 167px 105px 78px 4px repeat(13, 78px) 114px 101px 125px 26px; grid-template-rows: 24px 24px 43px repeat(23, 24px) 43px repeat(5, 24px); }
.ch, .rh { background: #e6f4ea; color: #757575; border-right: 1px solid #c0c0c0; border-bottom: 1px solid #c0c0c0; display: flex; align-items: center; justify-content: center; font-size: 12px; overflow: hidden; }
.rh { font-size: 11px; }
.ch.first { background: #cde9d7; }
.ch.last { border-right: 0; }
.rh.first { background: #e8eaed; }
.rh.plain { background: #f8f9fa; }
.corner { background: #f8f9fa; border-right: 1px solid #c0c0c0; border-bottom: 4px solid #bdbdbd; }
.c { border-right: 1px solid rgba(0,0,0,.12); border-bottom: 1px solid rgba(0,0,0,.12); font: 16px/19px "Liberation Serif", serif; color: #000; padding: 0 2px 2px 3px; display: flex; align-items: flex-end; white-space: pre; overflow: visible; position: relative; min-width: 0; }
.c.ctr { justify-content: center; text-align: center; padding: 0 0 2px; }
.c.rt { justify-content: flex-end; padding-right: 3px; }
.c.b { font-weight: 700; }
.c.mid { align-items: center; padding-bottom: 0; }
.c.clip { overflow: hidden; }
.c.f { padding-right: 20px; }
.c.f.wide { padding-right: 16px; }
.c svg { position: absolute; right: 4px; bottom: 6px; }
.c.mid svg { bottom: 17px; }
.x6 { background-color: #666; box-shadow: -1px 0 #666, 0 -1px #666; }
.x9 { background-color: #999; box-shadow: -1px 0 #8a8a8a, 0 -1px #999; }
.xc { background-color: #ccc; box-shadow: -1px 0 #b4b4b4, 0 -1px #b4b4b4; }
.xm { background-color: #f0f; box-shadow: -1px 0 #f0f, 0 -1px #d800d8; }
.xl { background-color: #a4c2f4; box-shadow: -1px 0 #90abd7, 0 -1px #90abd7; }
.xo { background-color: #e69138; box-shadow: -1px 0 #ca8031, 0 -1px #ca8031; }
.xb { background-color: #4285f4; box-shadow: -1px 0 #3a75d7, 0 -1px #3a75d7; }
.xv { background-color: #90f; }
.freeze { position: absolute; left: 396px; top: 0; width: 4px; height: 801px; background: linear-gradient(#bdbdbd 24px, #dadfe8 24px); }
.range { position: absolute; left: 45px; top: 47px; width: 1740px; height: 596px; border: 1px solid #188038; }
.sel { position: absolute; left: 45px; top: 23px; width: 168px; height: 25px; border: 2px solid #1a73e8; }
.sel i { position: absolute; right: -4px; bottom: -4px; width: 7px; height: 7px; background: #1a73e8; border: solid #fff; border-width: 1px 0 0 1px; }
.vs { width: 12px; border-left: 1px solid #d5d5d5; display: flex; flex-direction: column; }
.vhead { height: 24px; background: #f8f8f8; border-bottom: 1px solid #dadce0; }
.vtrack { flex: 1; padding: 1px; }
.vtrack i { display: block; width: 8px; height: 26px; border-radius: 4px; background: #dadce0; }
.sb { height: 16px; background: #f8f8f8; border-top: 1px solid #d5d5d5; display: flex; align-items: center; justify-content: center; }
.tri { width: 5px; height: 3px; background: #888; }
.u { clip-path: polygon(50% 0, 100% 100%, 0 100%); }
.d { clip-path: polygon(0 0, 100% 0, 50% 100%); }
.l, .r { width: 3px; height: 5px; }
.l { clip-path: polygon(100% 0, 100% 100%, 0 50%); }
.r { clip-path: polygon(0 0, 100% 50%, 0 100%); }
.hs { height: 12px; display: grid; grid-template-columns: 396px 4px 1348px 16px 16px 12px; }
.hfix, .hc { background: #f8f8f8; }
.hc { border-left: 1px solid #d5d5d5; }
.hbar { background: #dadfe8; }
.htrack { padding: 1px; }
.htrack i { display: block; width: 562px; height: 9px; border-radius: 5px; background: #dadce0; }
.hb { background: #f8f8f8; border-left: 1px solid #d5d5d5; display: flex; align-items: center; justify-content: center; }
.bottom { flex: 1; background: #f1f3f4; border-top: 1px solid #e0e0e4; display: grid; grid-template-columns: 31px 36px 91px 1fr 152px; align-items: center; padding-left: 49px; }
.bottom > svg { margin-top: -3px; }
.stab { height: 100%; background: #fff; box-shadow: 0 0 3px rgba(60,64,67,.3); display: flex; align-items: center; justify-content: center; gap: 9px; color: #188038; font-weight: 500; font-size: 14.500px; padding-bottom: 2px; clip-path: inset(0 -3px); }
.explore { grid-column: 5; align-self: stretch; margin-top: 1px; background: #fbfbfb; border-left: 1px solid #c0c0c0; display: flex; align-items: center; padding: 0 0 1px 12px; color: #0f9d58; font-size: 12.400px; letter-spacing: -.1px; white-space: nowrap; }
.explore span { margin-left: 14px; }
.side { width: 56px; border-left: 1px solid #dadce0; display: grid; grid-template-rows: repeat(5, 56px) 32px 58px 1fr; align-items: center; justify-items: center; padding-left: 1px; }
.rule { width: 20px; height: 1px; background: #dadce0; }
.side .last { align-self: end; margin-bottom: 22px; }
```
FILE: sheet.js
```js
const cells = document.getElementById('cells');
const letters = 'ABCDEFGHIJKLMNOPQRST'.split('');

// grid track of a column: 1 is the row header, 5 is the freeze bar
const track = i => (i < 3 ? i + 2 : i + 3);

function add(cls, row, col, span, text) {
  const el = document.createElement('div');
  el.className = cls;
  el.style.gridArea = `${row} / ${col} / span 1 / span ${span}`;
  el.textContent = text || '';
  cells.append(el);
  return el;
}

const fills = {};
function fill(col, from, to, cls) {
  for (let r = from; r <= to; r++) fills[col + r] = cls;
}
fill('D', 3, 6, 'x9'); fill('E', 3, 6, 'xc'); fill('F', 3, 6, 'xm'); fill('G', 3, 6, 'x9');
fill('H', 3, 6, 'xc'); fill('I', 3, 6, 'xl'); fill('J', 3, 25, 'xo'); fill('K', 3, 25, 'xb');
fill('G', 11, 14, 'xl'); fill('E', 15, 22, 'x6'); fill('F', 15, 25, 'xm');
fill('C', 19, 22, 'xl'); fill('G', 19, 22, 'x9'); fill('H', 19, 25, 'xc'); fill('I', 19, 25, 'xl');
fill('D', 23, 24, 'xc'); fill('E', 23, 24, 'xc'); fill('G', 23, 24, 'xc');
fill('C', 25, 25, 'x6'); fill('D', 25, 25, 'x6'); fill('E', 25, 25, 'x6'); fill('G', 25, 25, 'x9');
fill('A', 27, 27, 'xv'); fill('A', 28, 28, 'xm'); fill('A', 29, 29, 'xb');
fill('A', 30, 30, 'xl'); fill('A', 31, 31, 'xc');

const text = {};
const people = [
  ['Вафин Булат', 'Tiny Mile'], ['Коробов Данил', 'Tiny Mile'], ['Камалиев Эмиль', 'Tiny Mile'], ['Щегай Денис', 'Tiny Mile'],
  ['Будревич Анна', 'Teemyco'], ['Хазиева Эльвира', 'Teemyco'], ['Хакимуллин Рустем', 'Teemyco'], ['Царева Екатерина', 'Teemyco'],
  ['Бухарина Анастасия', 'Custom meat'], ['Кондратьев Артем', 'Custom meat'], ['Сабирзянова Аделя', 'Custom meat'], ['Ховаев Михаил', 'Custom meat'],
  ['Кузоватов Дамир', 'БРФ'], ['Максимов Константин', 'БРФ'], ['Федусин Егор', 'БРФ'], ['Хайрутдинов Артур', 'БРФ'],
  ['Асулрараев Данил', 'Tastyclub'], ['Гарипов Расим', 'Tastyclub'], ['Нурмухаметов Ринат', 'Tastyclub'], ['Хайкин Григорий', 'Tastyclub'],
  ['Савченко Ольга', 'Rover'], ['Хуснуллин Камиль', 'Rover'], ['Шагиев Дамир', '?']
];
people.forEach(([name, team], i) => { text['A' + (i + 3)] = name; text['B' + (i + 3)] = team; });
for (let r = 7; r <= 22; r++) text['K' + r] = '1';
for (const r of [11, 12, 13, 14, 19, 20, 21, 22]) for (const c of 'LMNOPQ') text[c + r] = '1';
for (let r = 19; r <= 22; r++) for (const c of 'FGHI') text[c + r] = '1';
Object.assign(text, { G11: '1(в папке)', G12: '1 (IDEF0)', G13: '1 (и)', G14: '1 (DFD)', B27: '2 балла', B30: '1', B31: '0,9' });

const dates = { C: '06/09/2021', D: '13/09/2021', E: '20/09/2021', F: '27/09/2021', G: '04/10/2021', H: '11/10/2021', I: '18/10/2021', J: 'доп', K: '25/10/2021', N: '1/11/2021', R: '08/11/2021', S: '15/11/2021' };
const heads = { A: 'name', B: 'команда', C: 'PV', D: 'ТЗ', E: 'ДГ', F: 'гранты', G: 'IDEF0', H: 'IDEF1X', I: 'IDEF3', J: 'ARIS', K: 'UML\nвар.исп.', L: 'UML\nкласс.', M: 'UML\nсост.', N: 'UML\nдеят.', O: 'UML\nпослед.', P: 'UML\nкоопер.', Q: 'UML\nкомп.+разв.', R: 'Риски', S: 'COCOMO II' };

add('corner', 1, 1, 1);
letters.forEach((l, i) => add('ch' + (l === 'A' ? ' first' : '') + (l === 'T' ? ' last' : ''), 1, track(i), 1, l === 'T' ? '' : l));

for (let r = 1; r <= 31; r++) {
  add('rh' + (r === 1 ? ' first' : r > 25 ? ' plain' : ''), r + 1, 1, 1, String(r));
  for (let i = 0; i < 20; i++) {
    const l = letters[i];
    const t = track(i);
    if (r === 1) {
      if (l === 'A') add('c b rt', 2, t, 1, 'понедельник');
      else if (l === 'B') add('c b rt', 2, t, 1, '10:10');
      else if (l === 'T') add('c clip', 2, t, 1, '22').style.paddingLeft = '13px';
      else if (l === 'K') { add('c ctr', 2, t, 3, dates.K); i += 2; }
      else if (l === 'N') { add('c ctr', 2, t, 4, dates.N); i += 3; }
      else add('c ctr', 2, t, 1, dates[l]);
    } else if (r === 2) {
      if (l === 'T') { add('c b clip', 3, t, 1, ' З\nБр').style.paddingLeft = '14px'; continue; }
      const el = add('c b' + (i > 1 ? ' ctr f' : '') + (l === 'S' ? ' wide' : '') + (i < 10 ? ' mid' : ''), 3, t, 1, heads[l]);
      el.insertAdjacentHTML('beforeend', '<svg width="12" height="7"><use href="#filt"/></svg>');
    } else if (r === 26 && i === 0) {
      add('c b clip', 27, t, 3, 'ставим 1 для отправки на (пере)проверку\n(у всех или у конкретного мембера, если акцент');
      add('c b clip', 27, 6, 2, 'на его вклад)').style.paddingLeft = '4px';
      i = 4;
    } else if (r === 28 && l === 'B') {
      add('c', 29, t, 2, 'информация выложена');
      i++;
    } else if (r === 29 && l === 'B') {
      add('c clip', 30, t, 2, 'делаем сегодня +на следую');
      const rest = add('c clip', 30, 6, 2, 'ющей неделе');
      rest.style.paddingLeft = '0';
      rest.style.textIndent = '-5px';
      i = 4;
    } else {
      const key = l + r;
      add('c' + (i > 1 ? ' ctr' : '') + (fills[key] ? ' ' + fills[key] : ''), r + 1, t, 1, text[key]);
    }
  }
}
```
